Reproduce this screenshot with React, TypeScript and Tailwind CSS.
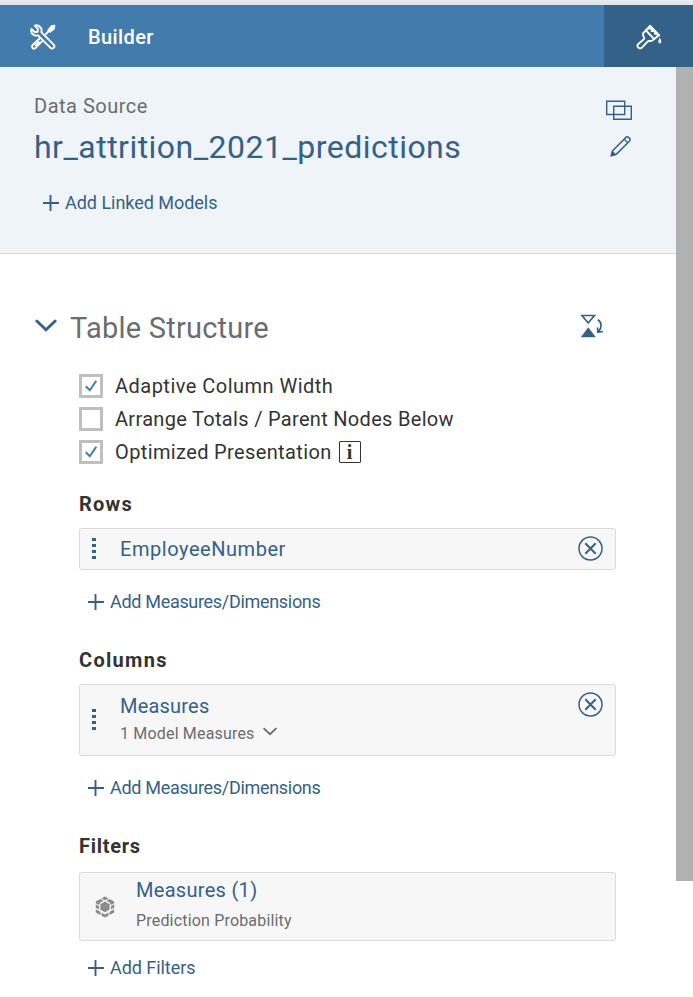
import type { ReactNode } from 'react';
import clsx from 'clsx';

type IconProps = {
    className?: string;
}

const ToolsIcon = () => (
    <svg width="26" height="26" viewBox="0 0 26 26" fill="none" stroke="#fff" strokeWidth="1.9" strokeLinejoin="round" strokeLinecap="round">
        <path d="M4.800 1.600 8 4.800 7.600 7.700 4.900 8.200 1.500 5C.8 7.400 1.600 9.800 3.600 10.900c1.400.8 3 .9 4.400.4L20.500 23.800c.9.9 2.300.9 3.200 0s.9-2.300 0-3.200L11.300 8.200c.5-1.500.4-3.200-.6-4.600C9.300 1.600 7 .9 4.800 1.600Z" />
        <path d="m9.600 14.500-6.900 6.500c-.9.9-.9 2.200-.1 3s2.100.8 3-.1l6.600-6.800M8.800 18.200l-3 2.900M16 10l3-3.200" />
        <path d="m18.400 6.200 3.300-4 2.700-.5-.6 3.100-3.700 3Z" fill="#fff" />
    </svg>
);

const BrushIcon = () => (
    <svg width="26" height="26" viewBox="0 0 26 26" fill="none" stroke="#fff" strokeWidth="1.900" strokeLinejoin="round" strokeLinecap="round">
        <path d="m7 9.300 7-7.300 9 9.300-6.700 5.200c-1.800 1.300-3.400-.2-4.800 1.200L6.200 23.300c-1.100 1.100-2.800 1.300-3.900.3-1.100-1.100-.9-2.800.2-3.900l5.300-4.400c1.700-1.600-1.900-4-.8-6Z" />
        <path d="m10 6.500 8.200 8.600" />
        <path d="m14 1.500-1.800 3.300 3.100-.3.2 2.900 3-.3.3 2.700 4.800 1.700Z" fill="#fff" strokeWidth="1.400" />
        <path d="M23.800 15c1.500 2.300 1.400 4 0 4s-1.500-1.700 0-4Z" fill="#fff" strokeWidth="1" />
    </svg>
);

const LinkedModelsIcon = () => (
    <svg width="26" height="20" viewBox="0 0 26 20" fill="none" stroke="#346187" strokeWidth="1.400">
        <path d="M.7 1.200h18v13.300H.7zM7.700 6.200h17.600v13H7.700z" />
    </svg>
);

const PencilIcon = () => (
    <svg width="22" height="22" viewBox="0 0 22 22" fill="none" stroke="#346187" strokeWidth="1.500" strokeLinejoin="round">
        <path d="M1.200 20.800 2.600 15.800 16 2.400c.8-.8 1.800-.8 2.600 0l1 1c.8.8.8 1.800 0 2.600L6.200 19.400Z" />
        <path d="m14.200 4.200 3.600 3.600" strokeWidth="1.300" />
        <path d="m1.200 20.800 1.200-4.700 3.500 3.500Z" fill="#346187" strokeWidth="1" />
    </svg>
);

const SwapAxesIcon = () => (
    <svg width="24" height="24" viewBox="0 0 24 24" fill="none" stroke="#346187" strokeWidth="1.700">
        <path d="M2 1.500h12.400L8.200 9Z" />
        <path d="m.8 23.200 7.500-9.900 7.500 9.900Z" fill="#346187" stroke="none" />
        <path d="M17.800 5.800c4 2.300 4.500 7.800.6 12.100M17.500 13.500l.4 4.800 5-.8" />
    </svg>
);

const PlusIcon = () => (
    <svg width="16" height="16" viewBox="0 0 16 16" stroke="#346187" strokeWidth="1.900">
        <path d="M7.500 0v16M0 8h16" />
    </svg>
);

const ChevronIcon = ({ className }: IconProps) => (
    <svg viewBox="0 0 22 13" className={className} fill="none" stroke="currentColor" strokeWidth="2.800" strokeLinecap="round">
        <path d="m1.800 2 9.200 8.800L20.200 2" />
    </svg>
);

const CubeIcon = () => (
    <svg width="20" height="22" viewBox="0 0 20 22" fill="#8b8b8b">
        <path d="m10 .5 3.500 1.900L10 4.200 6.500 2.400ZM5.500 3l3 1.700-3.100 1.700L4 9 .8 7.200V5.500ZM14.500 3l-3 1.700 3.100 1.700L16 9l3.200-1.800V5.500ZM.8 8.300l3.300 1.900v3.400L.8 11.800ZM19.200 8.300l-3.300 1.900v3.400l3.300-1.800ZM.8 13.200l4.600 2.500v3.200L.8 16.400ZM19.200 13.200l-4.600 2.500v3.200l4.600-2.500ZM6.500 16.500l3.500 2 3.500-2v3.200L10 21.600l-3.500-1.900Z" />
        <path d="m10 5.500 4.600 2.700v5.300L10 16.200l-4.600-2.700V8.200Z" />
    </svg>
);

const RemoveIcon = () => (
    <svg width="25" height="25" viewBox="0 0 25 25" fill="none" stroke="#346187">
        <circle cx="12.500" cy="12.500" r="11.500" strokeWidth="1.500" />
        <path d="m7.300 7.300 10.400 10.400M17.700 7.300 7.300 17.700" strokeWidth="2" />
    </svg>
);

const DragHandle = () => (
    <div className="mb-px flex w-1 shrink-0 flex-col gap-[3px]">
        {[0, 1, 2, 3].map((dot) => (
            <span key={dot} className="h-[3px] w-1 bg-[#346187]" />
        ))}
    </div>
);

type OptionProps = {
    label: string;
    checked?: boolean;
    className: string;
    children?: ReactNode;
}

const Option = ({ label, checked, className, children }: OptionProps) => (
    <label className="flex h-6 items-center">
        <span className="flex size-6 items-center justify-center border-[3px] border-[#bfbfbf] bg-white">
            {checked && (
                <svg width="12" height="12" viewBox="0 0 12 12" fill="none" stroke="#427cac" strokeWidth="2">
                    <path d="m.8 6.300 4 4L11.300.8" />
                </svg>
            )}
        </span>
        <span className={clsx('ml-3 text-xl leading-6 whitespace-nowrap text-[#333]', className)}>{label}</span>
        {children}
    </label>
);

type AddLinkProps = {
    label: string;
    className?: string;
}

const AddLink = ({ label, className }: AddLinkProps) => (
    <button className="flex h-6 items-center gap-[6px] text-lg leading-6 whitespace-nowrap text-[#346187]">
        <PlusIcon />
        <span className={className}>{label}</span>
    </button>
);

const App = () => {
    return (
        <div className="h-[997px] w-[693px] overflow-hidden bg-white font-['Roboto',sans-serif]">
            <div className="h-[5px] bg-linear-to-b from-[#eaecf0] to-[#dde1e6]" />
            <header className="flex h-[62px] bg-[#427cac] text-white">
                <div className="flex flex-1 items-center pt-[2px] pl-[30px]">
                    <ToolsIcon />
                    <h1 className="ml-8 text-xl font-medium tracking-[0.4px]">Builder</h1>
                </div>
                <button className="flex w-[89px] items-center justify-center bg-[#346187] pt-[2px]">
                    <BrushIcon />
                </button>
            </header>

            <div className="flex h-[930px]">
                <main className="w-[676px]">
                    <section className="flex h-[187px] justify-between border-b border-[#d3dade] bg-[#eff4f9] pt-[27px] pr-[44px] pl-[34px]">
                        <div>
                            <p className="text-xl leading-6 tracking-[0.5px] text-[#6a6d70]">Data Source</p>
                            <h2 className="mt-2 text-[32px] leading-[42px] tracking-[0.47px] text-[#346187]">hr_attrition_2021_predictions</h2>
                            <div className="mt-[23px] ml-[9px]">
                                <AddLink label="Add Linked Models" className="tracking-[-0.03px]" />
                            </div>
                        </div>
                        <div className="flex flex-col items-end gap-[15px] pt-[6px]">
                            <LinkedModelsIcon />
                            <PencilIcon />
                        </div>
                    </section>

                    <section className="pt-[54px] pr-[60px] pl-[35px]">
                        <div className="flex h-10 items-center text-[#346187]">
                            <ChevronIcon className="mb-[5px] h-[13px] w-[22px]" />
                            <h2 className="mt-[2px] ml-[13px] flex-1 text-[29px] tracking-[0.23px] text-[#6a6d70]">Table Structure</h2>
                            <div className="mr-3 mb-1">
                                <SwapAxesIcon />
                            </div>
                        </div>

                        <div className="pl-11">
                            <div className="mt-[26px] flex flex-col gap-[9px]">
                                <Option label="Adaptive Column Width" checked className="tracking-[0.48px]" />
                                <Option label="Arrange Totals / Parent Nodes Below" className="tracking-[0.31px]" />
                                <Option label="Optimized Presentation" checked className="tracking-[0.37px]">
                                    <span className="ml-[7px] flex size-[22px] items-center justify-center rounded-[1px] border-[1.500px] border-[#333] font-['Liberation_Serif',serif] text-xl font-bold text-[#333]">i</span>
                                </Option>
                            </div>

                            <h3 className="mt-7 text-xl leading-6 font-bold tracking-[1.2px] text-[#333]">Rows</h3>
                            <div className="mt-3 flex h-[42px] items-center rounded-[3px] border border-[#d9d9d9] bg-[#f7f7f7] pr-3 pl-3">
                                <DragHandle />
                                <span className="ml-6 flex-1 text-xl tracking-[0.55px] text-[#346187]">EmployeeNumber</span>
                                <div className="mb-[2px]">
                                    <RemoveIcon />
                                </div>
                            </div>
                            <div className="mt-5 ml-[9px]">
                                <AddLink label="Add Measures/Dimensions" className="tracking-[-0.31px]" />
                            </div>

                            <h3 className="mt-[34px] text-xl leading-6 font-bold tracking-[1.300px] text-[#333]">Columns</h3>
                            <div className="mt-3 flex h-[72px] items-center rounded-[3px] border border-[#d9d9d9] bg-[#f7f7f7] pr-3 pl-3">
                                <DragHandle />
                                <div className="ml-6 flex-1">
                                    <p className="-mt-px text-xl leading-7 tracking-[0.2px] text-[#346187]">Measures</p>
                                    <p className="flex items-center text-base leading-7 tracking-[0.18px] text-[#6a6d70]">
                                        1 Model Measures
                                        <ChevronIcon className="mb-[5px] ml-2 h-[9px] w-[14px]" />
                                    </p>
                                </div>
                                <div className="mt-[7px] self-start">
                                    <RemoveIcon />
                                </div>
                            </div>
                            <div className="mt-5 ml-[9px]">
                                <AddLink label="Add Measures/Dimensions" className="tracking-[-0.31px]" />
                            </div>

                            <h3 className="mt-[34px] text-xl leading-6 font-bold tracking-[0.7px] text-[#333]">Filters</h3>
                            <div className="mt-[14px] flex h-[69px] items-center rounded-[3px] border border-[#d9d9d9] bg-[#f7f7f7] pl-[15px]">
                                <CubeIcon />
                                <div className="mb-[2px] ml-[21px]">
                                    <p className="text-xl leading-[30px] tracking-[0.3px] text-[#346187]">Measures (1)</p>
                                    <p className="text-base leading-[31px] tracking-[0.18px] text-[#6a6d70]">Prediction Probability</p>
                                </div>
                            </div>
                            <div className="mt-[15px] ml-[9px]">
                                <AddLink label="Add Filters" className="tracking-[-0.05px]" />
                            </div>
                        </div>
                    </section>
                </main>
                <div className="h-[814px] w-[17px] bg-[#b1b1b1]" />
            </div>
        </div>
    );
};

export default App;
